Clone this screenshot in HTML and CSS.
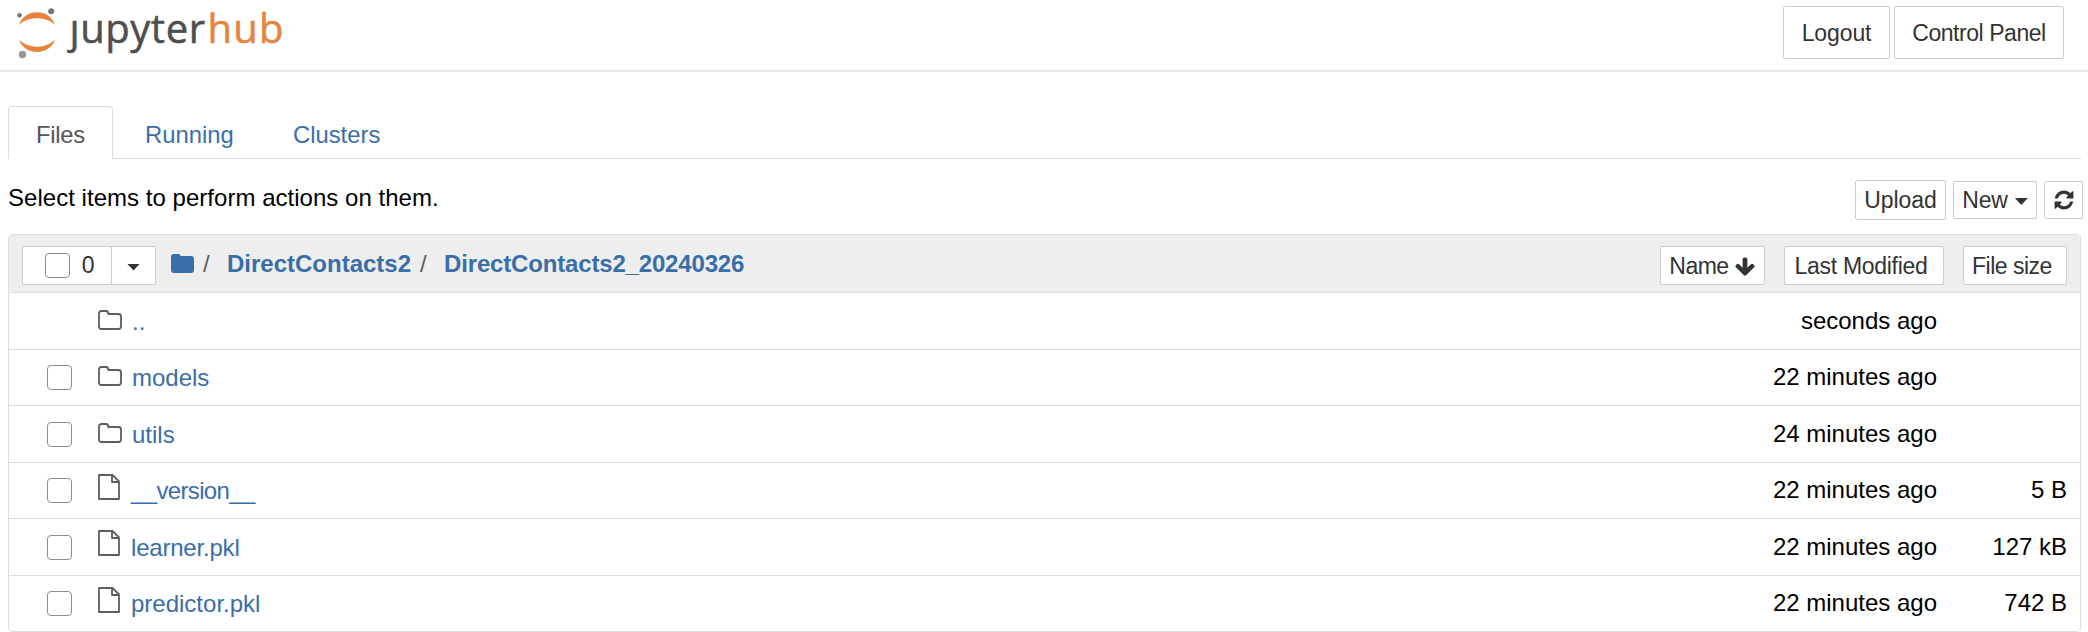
FILE: index.html
```html
<!DOCTYPE html>
<html lang="en">
<head>
<meta charset="utf-8">
<title>JupyterHub</title>
<link rel="stylesheet" href="styles.css">
</head>
<body>
<svg class="defs" width="0" height="0">
  <symbol id="folder-o" viewBox="0 0 24 20"><path d="M1 3.500Q1 1 3.500 1H7.800Q10.300 1 10.300 3.500V4H20.500Q23 4 23 6.500V16.500Q23 19 20.500 19H3.500Q1 19 1 16.500Z" fill="none" stroke="#5e5e5e" stroke-width="1.800"/></symbol>
  <symbol id="folder" viewBox="0 0 23 19"><path d="M0 3Q0 0 3 0H7Q9.500 0 9.700 2H20Q23 2 23 5V16Q23 19 20 19H3Q0 19 0 16Z" fill="#3a6ea8"/></symbol>
  <symbol id="file-o" viewBox="0 0 22 26"><path d="M1 1H14.500L21 7.500V25H1ZM14 1V8H21" fill="none" stroke="#5e5e5e" stroke-width="1.800" stroke-linejoin="round"/></symbol>
</svg>
<header class="header">
  <svg class="logo" width="290" height="66" viewBox="0 0 290 66" role="img" aria-label="jupyterhub">
    <path d="M19 25C24 8 50 8 55 25C47 16 27 16 19 25Z" fill="#e8833c"/>
    <path d="M19 39.500C24 56 50 56 55 39.500C47 49 27 49 19 39.500Z" fill="#e8833c"/>
    <circle cx="19.500" cy="15.300" r="2.300" fill="#767677"/>
    <circle cx="51.200" cy="11.300" r="3" fill="#767677"/>
    <circle cx="22.500" cy="54.500" r="3.700" fill="#989798"/>
    <text class="word gray" x="69.500" y="42.500" textLength="135.500">jupyter</text>
    <text class="word orange" x="207.500" y="42.500" textLength="76">hub</text>
    <rect x="66" y="6" width="15" height="14" fill="#fff"/>
  </svg>
  <div class="session">
    <button class="btn big logout">Logout</button>
    <button class="btn big panel">Control Panel</button>
  </div>
</header>
<main class="content">
  <nav class="tabs">
    <a class="tab active">Files</a>
    <a class="tab running">Running</a>
    <a class="tab clusters">Clusters</a>
  </nav>
  <div class="toolbar">
    <span class="hint">Select items to perform actions on them.</span>
    <div class="tools">
      <button class="btn upload">Upload</button>
      <button class="btn new">New<i class="caret"></i></button>
      <button class="btn refresh"><svg width="22" height="22" viewBox="0 0 1792 1792"><path fill="#333" d="M1639 1056q0 5-1 7-64 268-268 434.500t-478 166.500q-146 0-282.500-55t-243.500-157l-129 129q-19 19-45 19t-45-19-19-45v-448q0-26 19-45t45-19h448q26 0 45 19t19 45-19 45l-137 137q71 66 161 102t187 36q134 0 250-65t186-179q11-17 53-117 8-23 30-23h192q13 0 22.500 9.500t9.500 22.500zm25-800v448q0 26-19 45t-45 19h-448q-26 0-45-19t-19-45 19-45l138-138q-148-137-349-137-134 0-250 65t-186 179q-11 17-53 117-8 23-30 23h-199q-13 0-22.500-9.500t-9.500-22.500v-7q65-268 270-434.500t480-166.500q146 0 284 55.500t245 156.500l130-129q19-19 45-19t45 19 19 45z"/></svg></button>
    </div>
  </div>
  <section class="list">
    <div class="list-head">
      <div class="select-group">
        <button class="btn all"><i class="check"></i>0</button>
        <button class="btn drop"><i class="caret"></i></button>
      </div>
      <div class="crumbs">
        <svg width="23" height="19"><use href="#folder"/></svg>
        <span class="slash first">/</span>
        <a class="crumb">DirectContacts2</a>
        <span class="slash">/</span>
        <a class="crumb current">DirectContacts2_20240326</a>
      </div>
      <div class="sorts">
        <button class="btn name">Name<svg width="22" height="22" viewBox="0 0 1792 1792"><path fill="#333" d="M1675 832q0 53-37 90l-651 652q-39 37-91 37-53 0-90-37l-651-652q-38-36-38-90 0-53 38-91l74-75q39-37 91-37 53 0 90 37l294 294v-704q0-52 38-90t90-38h128q52 0 90 38t38 90v704l294-294q37-37 90-37 52 0 91 37l75 75q37 39 37 91z"/></svg></button>
        <button class="btn modified">Last Modified</button>
        <button class="btn size">File size</button>
      </div>
    </div>
    <div class="row tall"><span class="box"></span><svg class="icon" width="24" height="20"><use href="#folder-o"/></svg><a class="item">..</a><span class="time">seconds ago</span><span class="bytes"></span></div>
    <div class="row"><span class="box"><i class="check"></i></span><svg class="icon" width="24" height="20"><use href="#folder-o"/></svg><a class="item">models</a><span class="time">22 minutes ago</span><span class="bytes"></span></div>
    <div class="row tall"><span class="box"><i class="check"></i></span><svg class="icon" width="24" height="20"><use href="#folder-o"/></svg><a class="item">utils</a><span class="time">24 minutes ago</span><span class="bytes"></span></div>
    <div class="row file"><span class="box"><i class="check"></i></span><svg class="icon" width="22" height="26"><use href="#file-o"/></svg><a class="item version">__version__</a><span class="time">22 minutes ago</span><span class="bytes">5 B</span></div>
    <div class="row tall file"><span class="box"><i class="check"></i></span><svg class="icon" width="22" height="26"><use href="#file-o"/></svg><a class="item learner">learner.pkl</a><span class="time">22 minutes ago</span><span class="bytes">127 kB</span></div>
    <div class="row file"><span class="box"><i class="check"></i></span><svg class="icon" width="22" height="26"><use href="#file-o"/></svg><a class="item">predictor.pkl</a><span class="time">22 minutes ago</span><span class="bytes">742 B</span></div>
  </section>
</main>
</body>
</html>
```
FILE: styles.css
```css
* { box-sizing: border-box; }
body {
  margin: 0;
  height: 632px;
  overflow: hidden;
  background: #fff;
  color: #000;
  font: 24px "Liberation Sans", Arial, sans-serif;
}
.defs { position: absolute; }
.header {
  display: flex;
  justify-content: space-between;
  height: 72px;
  border-bottom: 2px solid #e7e7e7;
}
.logo { display: block; }
.word { font: 40px "Open Sans", "Noto Sans", sans-serif; stroke-width: .5px; }
.gray { fill: #4e4e4e; stroke: #4e4e4e; }
.orange { fill: #e8833c; stroke: #e8833c; }
.session { display: flex; gap: 4px; padding: 6px 24px 0 0; }
.btn {
  display: flex;
  align-items: center;
  justify-content: center;
  height: 39px;
  margin: 0;
  padding: 0;
  border: 1px solid #ccc;
  border-radius: 2px;
  background: #fff;
  color: #333;
  font: 23px "Liberation Sans", Arial, sans-serif;
  letter-spacing: -.1px;
  white-space: nowrap;
}
.big { height: 53px; padding-top: 1px; }
.logout { width: 107px; }
.panel { width: 170px; letter-spacing: -.45px; }
.content { padding: 34px 6px 0 8px; }
.tabs {
  display: flex;
  height: 53px;
  margin-right: 1px;
  border-bottom: 1px solid #ddd;
}
.tab {
  height: 53px;
  padding-top: 1px;
  line-height: 56px;
  font-size: 23.800px;
  color: #3a6ea8;
}
.active {
  width: 105px;
  padding-left: 27px;
  padding-top: 0;
  border: 1px solid #ddd;
  border-bottom: 0;
  border-radius: 4px 4px 0 0;
  background: #fff;
  color: #555;
  letter-spacing: -.3px;
}
.running { margin-left: 32px; width: 148px; }
.toolbar {
  display: flex;
  justify-content: space-between;
  height: 75px;
  padding-top: 20px;
}
.hint { line-height: 38px; letter-spacing: .03px; }
.tools { display: flex; align-items: flex-start; gap: 7px; margin-right: -1px; padding-top: 1px; }
.tools .btn { margin-top: 1px; height: 38px; }
.tools .upload { width: 91px; height: 40px; margin-top: 0; }
.new { width: 84px; gap: 7px; }
.refresh { width: 39px; }
.caret {
  width: 13px;
  height: 7px;
  margin-top: 3px;
  background: #333;
  clip-path: polygon(0 0, 100% 0, 50% 100%);
}
.list {
  margin-right: 1px;
  border: 1px solid #ddd;
  border-radius: 4px;
}
.list-head {
  display: flex;
  height: 57px;
  background: #eee;
}
.select-group { display: flex; padding: 11px 0 0 13px; }
.all {
  width: 90px;
  gap: 12px;
  padding-left: 5px;
  border-radius: 2px 0 0 2px;
}
.drop { width: 45px; margin-left: -1px; border-radius: 0 2px 2px 0; }
.check {
  display: block;
  width: 25px;
  height: 25px;
  border: 1px solid #8e8b98;
  border-radius: 4px;
  background: #fff;
}
.crumbs { display: flex; padding: 12px 0 0 15px; line-height: 34px; }
.crumbs svg { margin-top: 7px; }
.slash { width: 33px; padding-left: 9px; color: #5e5e5e; }
.crumb { color: #3a6ea8; font-weight: bold; }
.current { letter-spacing: -.17px; }
.sorts { display: flex; margin-left: auto; padding: 11px 13px 0 0; }
.sorts .btn { padding-top: 2px; }
.name { width: 105px; gap: 5px; letter-spacing: -.5px; }
.modified { width: 160px; margin-left: 19px; letter-spacing: -.3px; }
.modified, .size { padding-right: 6px; }
.size { width: 104px; margin-left: 19px; letter-spacing: -.5px; }
.row {
  display: grid;
  grid-template-columns: 38px 52px 34px 1fr 300px 143px;
  height: 56px;
  border-top: 1px solid #ddd;
  line-height: 55px;
}
.tall { height: 57px; padding-top: 1px; }
.box { grid-column: 2; padding-top: 15px; }
.icon { margin: 16px 0 0 -1px; }
.file .icon { margin-top: 11px; }
.tall.file .icon { margin-top: 10px; }
.item { color: #3a6ea8; height: 55px; margin-left: -1px; }
.file .item { margin-left: -2px; }
.version { letter-spacing: -.65px; }
.learner { letter-spacing: -.2px; }
.time { text-align: right; line-height: 54px; }
.bytes { text-align: right; padding-right: 13px; line-height: 54px; }
```
